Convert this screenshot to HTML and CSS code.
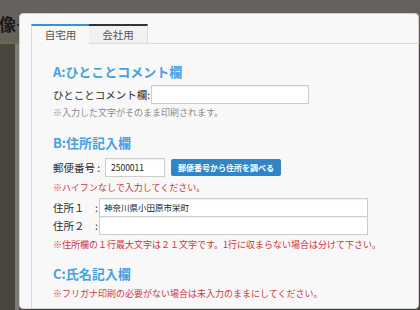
FILE: index.html
```html
<!DOCTYPE html>
<html lang="ja">
<head>
<meta charset="utf-8">
<link rel="stylesheet" href="styles.css">
</head>
<body>
<div class="page">
  <div class="page-head"><span class="page-title">像イ</span></div>
  <div class="page-rule"></div>
  <div class="page-body"><div class="page-stripe"></div></div>
</div>
<div class="modal">
  <div class="tabs">
    <div class="tab active">自宅用</div>
    <div class="tab">会社用</div>
  </div>
  <div class="panel">
    <h2 class="sec first">A:ひとことコメント欄</h2>
    <div class="row row-a">
      <span class="lbl">ひとことコメント欄:</span>
      <span class="inp inp-a"></span>
    </div>
    <p class="note gray">※入力した文字がそのまま印刷されます。</p>

    <h2 class="sec">B:住所記入欄</h2>
    <div class="row row-zip">
      <span class="lbl lbl-zip">郵便番号&nbsp;:</span>
      <span class="inp inp-zip">2500011</span>
      <span class="btn">郵便番号から住所を調べる</span>
    </div>
    <p class="note red n1">※ハイフンなしで入力してください。</p>
    <div class="row row-addr">
      <span class="lbl lbl-addr">住所１　:</span>
      <span class="inp inp-addr">神奈川県小田原市栄町</span>
    </div>
    <div class="row row-addr second">
      <span class="lbl lbl-addr">住所２　:</span>
      <span class="inp inp-addr"></span>
    </div>
    <p class="note red n2">※住所欄の１行最大文字は２１文字です。1行に収まらない場合は分けて下さい。</p>

    <h2 class="sec c">C:氏名記入欄</h2>
    <p class="note red n3">※フリガナ印刷の必要がない場合は未入力のままにしてください。</p>
  </div>
</div>
</body>
</html>
```
FILE: styles.css
```css
* { box-sizing: border-box; }
html, body { margin: 0; padding: 0; }
body {
  width: 420px;
  height: 310px;
  overflow: hidden;
  position: relative;
  background: #4b4741;
  font-family: "Noto Sans CJK JP", "Noto Sans", sans-serif;
  color: #333;
}
.page { display: flex; flex-direction: column; height: 310px; }
.page-head {
  height: 42px;
  background: #65615d;
  padding-top: 12px;
  overflow: hidden;
  white-space: nowrap;
}
.page-title { font-size: 17px; font-weight: 700; color: #1a1a1a; line-height: 20px; margin-left: -1px; }
.page-rule { height: 2px; background: #6d6c42; }
.page-body { flex: 1; background: #4a463f; position: relative; }
.page-stripe { position: absolute; left: 15px; top: 0; bottom: 0; width: 4px; background: #7f7b74; }

.modal {
  position: absolute;
  left: 19px;
  top: 13px;
  width: 400px;
  height: 296px;
  background: #f8f8f8;
  border: 1px solid #cfcfcf;
  border-radius: 4px;
  padding: 10px 0 0 11px;
  overflow: hidden;
}
.tabs {
  display: flex;
  height: 20px;
  border-bottom: 1px solid #dcdcdc;
}
.tab {
  font-size: 10.5px;
  line-height: 17px;
  color: #555;
  text-align: center;
  background: #f1f1f1;
  border-top: 2px solid #333;
  border-right: 1px solid #dcdcdc;
  width: 59px;
}
.tab.active {
  width: 58px;
  background: #f8f8f8;
  border-top-color: #3b8fd6;
  border-left: 1px solid #dcdcdc;
  border-right: none;
  height: 20px;
}
.panel {
  border-left: 1px solid #dcdcdc;
  height: 300px;
  padding: 20px 0 0 21px;
}
.sec {
  margin: 16px 0 0;
  font-size: 13px;
  line-height: 16px;
  font-weight: 700;
  color: #46a1e3;
}
.sec.first { margin-top: 0; }
.sec.c { margin-top: 15px; }
.row { display: flex; align-items: center; }
.lbl { font-size: 10.5px; line-height: 14px; color: #2e2e2e; white-space: nowrap; }
.inp {
  display: block;
  height: 19px;
  background: #fff;
  border: 1px solid #cdcdcd;
  box-shadow: inset 0 1px 1px rgba(0,0,0,0.06);
  font-size: 8.5px;
  line-height: 17px;
  padding-left: 4px;
  color: #222;
}
.row-a { margin-top: 5px; }
.inp-a { width: 158px; margin-left: 1px; }
.note { margin: 0; font-size: 9px; line-height: 12px; white-space: nowrap; }
.gray { color: #8a8a8a; margin-top: 3px; }
.red { color: #d2343c; }
.row-zip { margin-top: 7px; }
.lbl-zip { width: 52px; }
.inp-zip { width: 60px; padding-left: 5px; }
.btn {
  margin-left: 6px;
  width: 110px;
  height: 17px;
  background: #2e86c9;
  border-radius: 2px;
  color: #fff;
  font-size: 8px;
  font-weight: 700;
  line-height: 17px;
  text-align: center;
}
.n1 { margin-top: 5px; }
.row-addr { margin-top: 4px; }
.row-addr.second { margin-top: -1px; }
.lbl-addr { width: 46px; }
.inp-addr { width: 269px; }
.n2 { margin-top: 4px; }
.n3 { margin-top: 6px; }
```
